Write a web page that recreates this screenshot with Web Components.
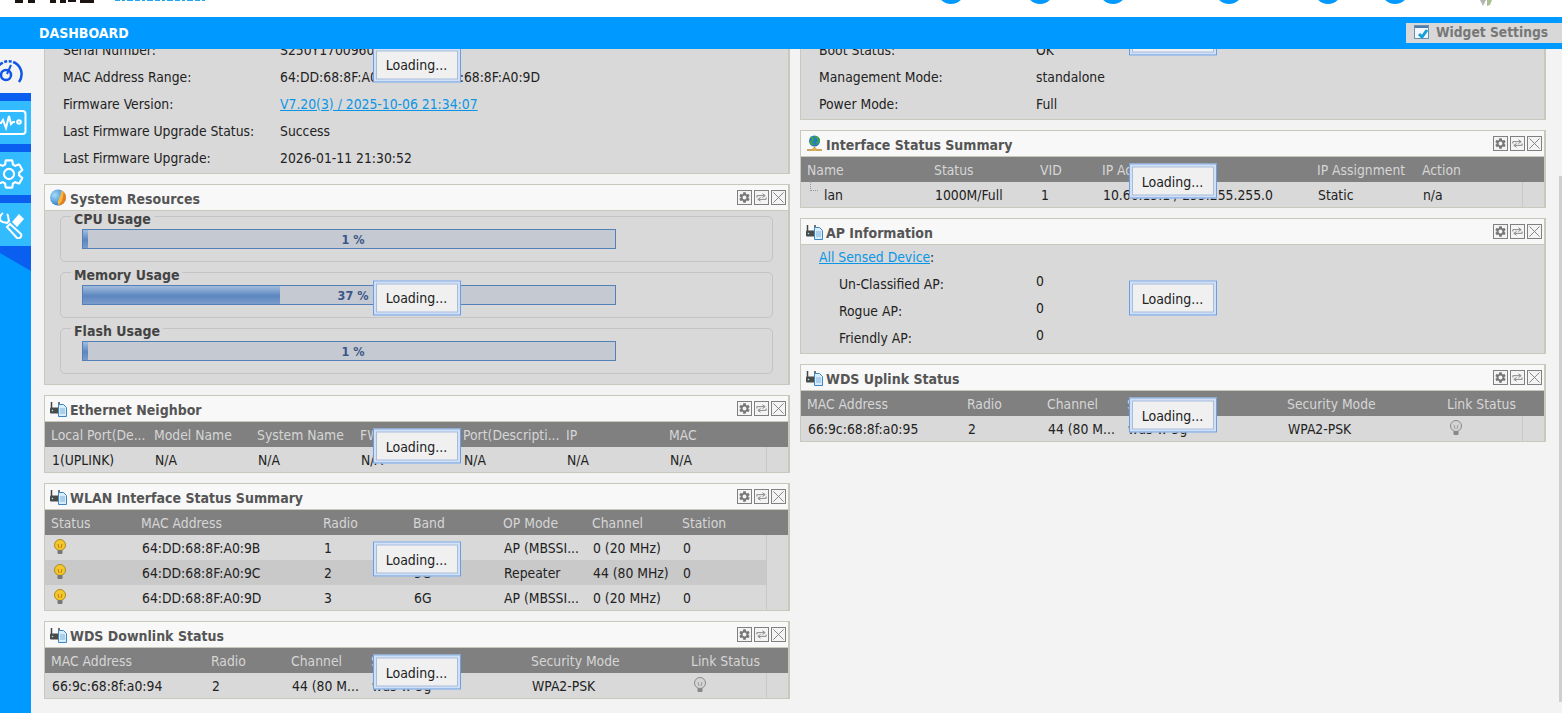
<!DOCTYPE html>
<html lang="en">
<head>
<meta charset="utf-8">
<title>Dashboard</title>
<style>
  html, body { margin: 0; height: 100%; overflow: hidden; background: #f3f3f3; }
  body { font: 13.8px "DejaVu Sans Condensed", "DejaVu Sans", sans-serif; font-stretch: condensed; color: #222; }
</style>
</head>
<body>
<zy-app>
  <zy-topbar slot="top"></zy-topbar>
  <zy-sidebar slot="side"></zy-sidebar>

  <zy-widget slot="left" bare height="220" style="--shift:1px">
    <zy-keyval label="Serial Number:">S250Y1700960</zy-keyval>
    <zy-keyval label="MAC Address Range:">64:DD:68:8F:A0:9B ~&nbsp; 64:DD:68:8F:A0:9D</zy-keyval>
    <zy-keyval label="Firmware Version:"><a href="#">V7.20(3) / 2025-10-06 21:34:07</a></zy-keyval>
    <zy-keyval label="Last Firmware Upgrade Status:">Success</zy-keyval>
    <zy-keyval label="Last Firmware Upgrade:">2026-01-11 21:30:52</zy-keyval>
  </zy-widget>

  <zy-widget slot="left" heading="System Resources" icon="pie" pad style="--shift:0px">
    <zy-usage label="CPU Usage" value="1"></zy-usage>
    <zy-usage label="Memory Usage" value="37"></zy-usage>
    <zy-usage label="Flash Usage" value="1"></zy-usage>
  </zy-widget>

  <zy-widget slot="left" heading="Ethernet Neighbor" icon="router">
    <zy-table cols="103 103 103 103 103 103 98"
      head="Local Port(De...|Model Name|System Name|FW Version|Port(Descripti...|IP|MAC"
      rows="1(UPLINK)|N/A|N/A|N/A|N/A|N/A|N/A"></zy-table>
  </zy-widget>

  <zy-widget slot="left" heading="WLAN Interface Status Summary" icon="router">
    <zy-table cols="90 182 90 90 89 90 91"
      head="Status|MAC Address|Radio|Band|OP Mode|Channel|Station"
      rows="@on|64:DD:68:8F:A0:9B|1|2.4G|AP (MBSSI...|0 (20 MHz)|0;@on|64:DD:68:8F:A0:9C|2|5G|Repeater|44 (80 MHz)|0;@on|64:DD:68:8F:A0:9D|3|6G|AP (MBSSI...|0 (20 MHz)|0"></zy-table>
  </zy-widget>

  <zy-widget slot="left" heading="WDS Downlink Status" icon="router">
    <zy-table cols="160 80 80 160 160 82"
      head="MAC Address|Radio|Channel|SSID|Security Mode|Link Status"
      rows="66:9c:68:8f:a0:94|2|44 (80 M...|wds-w-5g|WPA2-PSK|@off"></zy-table>
  </zy-widget>

  <zy-widget slot="right" bare height="166" style="--shift:1px">
    <zy-keyval label="Boot Status:">OK</zy-keyval>
    <zy-keyval label="Management Mode:">standalone</zy-keyval>
    <zy-keyval label="Power Mode:">Full</zy-keyval>
  </zy-widget>

  <zy-widget slot="right" heading="Interface Status Summary" icon="globe">
    <zy-table cols="127 106 62 215 105 108"
      head="Name|Status|VID|IP Address|IP Assignment|Action"
      rows="#lan|1000M/Full|1|10.66.15.1 / 255.255.255.0|Static|n/a"></zy-table>
  </zy-widget>

  <zy-widget slot="right" heading="AP Information" icon="router" height="109">
    <zy-keyval style="margin-top:-2px"><span><a href="#">All Sensed Device</a>:</span></zy-keyval>
    <zy-keyval sub label="Un-Classified AP:">0</zy-keyval>
    <zy-keyval sub label="Rogue AP:">0</zy-keyval>
    <zy-keyval sub label="Friendly AP:">0</zy-keyval>
  </zy-widget>

  <zy-widget slot="right" heading="WDS Uplink Status" icon="router">
    <zy-table cols="160 80 80 160 160 83"
      head="MAC Address|Radio|Channel|SSID|Security Mode|Link Status"
      rows="66:9c:68:8f:a0:95|2|44 (80 M...|wds-w-5g|WPA2-PSK|@off"></zy-table>
  </zy-widget>
</zy-app>

<script>
  const ICONS = {
    pie: `<svg width="17" height="17" viewBox="0 0 17 17"><defs><radialGradient id="pb" cx=".3" cy=".35" r=".8"><stop offset="0" stop-color="#a4dbf7"/><stop offset="1" stop-color="#1b6fc4"/></radialGradient></defs><circle cx="8" cy="8.500" r="8" fill="url(#pb)"/><path d="M11 1.200A8 8 0 0 1 9 16.400C6.500 13.500 8.500 11 9.500 8.500c1-2 2-4 1.500-7.300z" fill="#f6b73c"/><path d="M13.500 3A8 8 0 0 1 9 16.400l0-.5c3-2.500 4.500-7.500 4.500-12.900z" fill="#e8791c"/></svg>`,
    router: `<svg width="17" height="16" viewBox="0 0 17 16"><path d="M1.500 1v6M9 1v6" stroke="#444" stroke-width="1.500"/><rect x="0" y="6.500" width="10" height="6" rx="1" fill="#4a4a4a"/><circle cx="2.500" cy="9.500" r=".8" fill="#8fc"/><path d="M8.500 3.500h5l3 3v9h-8z" fill="#d8ecfa" stroke="#3c86c6"/><path d="M10 8h5M10 10h5M10 12h5" stroke="#7fb3dc"/></svg>`,
    globe: `<svg width="17" height="17" viewBox="0 0 17 17"><circle cx="8.500" cy="6" r="5.500" fill="#2a78cc"/><path d="M4.500 2.500c2 0 3 1 2.500 2.500S4.500 6 5 8s2.500 0 3 2M9.500 1c0 2 3 1.500 3.500 3.500S10.500 7 11.500 9" stroke="#3aa83a" stroke-width="2" fill="none"/><path d="M8.500 11.500v2M1 15h15" stroke="#b98a2e" stroke-width="1.500"/><rect x="6.500" y="13" width="4" height="3" fill="#e0b050"/></svg>`,
    on: `<svg width="14" height="16" viewBox="0 0 14 16"><circle cx="7" cy="6" r="5.500" fill="#f4c82c" stroke="#a88a20"/><path d="M5 5l1 4M9 5L8 9" stroke="#c07a10"/><rect x="4.500" y="11" width="5" height="4" rx="1" fill="#777"/></svg>`,
    off: `<svg width="14" height="16" viewBox="0 0 14 16"><circle cx="7" cy="6" r="5.500" fill="#d4d4d4" stroke="#8a8a8a"/><path d="M5 5l1 4M9 5L8 9" stroke="#999"/><rect x="4.500" y="11" width="5" height="4" rx="1" fill="#888"/></svg>`
  };
  const GEAR = "M19.140 12.940c.04-.3.06-.61.06-.94 0-.32-.02-.64-.07-.94l2.030-1.580a.49.49 0 0 0 .12-.61l-1.920-3.320a.488.488 0 0 0-.59-.22l-2.390.96c-.5-.38-1.030-.7-1.620-.94l-.36-2.540a.484.484 0 0 0-.48-.41h-3.840c-.24 0-.43.17-.47.41l-.36 2.540c-.59.24-1.130.57-1.620.94l-2.390-.96c-.22-.08-.47 0-.59.22L2.740 8.870c-.12.21-.08.47.12.61l2.030 1.580c-.05.3-.09.63-.09.94s.02.64.07.94l-2.030 1.580a.49.49 0 0 0-.12.61l1.920 3.320c.12.22.37.29.59.22l2.390-.96c.5.38 1.030.7 1.620.94l.36 2.540c.05.24.24.41.48.41h3.840c.24 0 .44-.17.47-.41l.36-2.540c.59-.24 1.130-.56 1.620-.94l2.390.96c.22.08.47 0 .59-.22l1.920-3.320c.12-.22.07-.47-.12-.61l-2.010-1.580zM12 15.600c-1.980 0-3.600-1.620-3.600-3.600s1.620-3.600 3.600-3.600 3.600 1.620 3.600 3.600-1.620 3.600-3.600 3.600z";

  class ZyApp extends HTMLElement {
    constructor() {
      super();
      this.attachShadow({ mode: "open" });
      this.shadowRoot.innerHTML = `
        <style>
          :host { display: grid; grid-template-columns: 31px 1fr; grid-template-rows: 49px 1fr; height: 713px; overflow: hidden; }
          .top { grid-column: 1 / 3; position: relative; z-index: 2; }
          main { position: relative; overflow: hidden; padding-left: 13px; }
          .cols { display: grid; grid-template-columns: 746px 746px; gap: 10px; margin-top: -96px; align-items: start; }
          .col { display: flex; flex-direction: column; gap: 10px; }
          .thumb { position: absolute; right: 0; top: 127px; width: 3px; height: 526px; background: #cfcfcf; }
        </style>
        <div class="top"><slot name="top"></slot></div>
        <slot name="side"></slot>
        <main>
          <div class="cols">
            <div class="col"><slot name="left"></slot></div>
            <div class="col"><slot name="right"></slot></div>
          </div>
          <div class="thumb"></div>
        </main>`;
    }
  }

  class ZyTopbar extends HTMLElement {
    constructor() {
      super();
      this.attachShadow({ mode: "open" });
      this.shadowRoot.innerHTML = `
        <style>
          :host { display: block; }
          .head { position: relative; height: 17px; background: #fff; overflow: hidden; }
          .logo { position: absolute; left: 0; top: 0; }
          .dots { display: flex; margin-left: 937px; }
          .dots i { display: block; width: 28px; height: 28px; margin-top: -24px; border-radius: 50%; background: #0099ff; }
          .fan { position: absolute; left: 1477px; top: 0; }
          .bar { height: 32px; background: #0099ff; display: flex; align-items: center; justify-content: space-between; }
          .title { margin-left: 39px; color: #fff; font-weight: bold; font-size: 14px; }
          .settings { display: flex; align-items: center; gap: 7px; height: 20px; width: 156px; box-sizing: border-box; padding: 0 0 2px 8px; background: #d8d8d8; color: #777; font-weight: bold; font-size: 13.7px; }
        </style>
        <div class="head">
          <svg class="logo" width="210" height="4" aria-hidden="true">
            <g fill="#1c1412"><rect x="15" width="8" height="3"/><rect x="28" width="7" height="3"/><rect x="50" width="6" height="3"/><rect x="60" width="6" height="3"/><rect x="68" width="8" height="2"/><rect x="80" width="14" height="3"/></g>
            <path d="M115 .5H205" stroke="#1ea7f2" stroke-dasharray="5 2 3 2 6 2"/>
          </svg>
          <div class="dots">
            <i></i><i style="margin-left:61px"></i><i style="margin-left:45px"></i><i style="margin-left:88px"></i><i style="margin-left:71px"></i><i style="margin-left:39px"></i>
          </div>
          <svg class="fan" width="20" height="7" aria-hidden="true"><path d="M3 0l3 6 3-6z" fill="#b5b5b5"/><path d="M10 0v6l3-1 2-5z" fill="#a8c090"/></svg>
        </div>
        <div class="bar">
          <div class="title">DASHBOARD</div>
          <div class="settings">
            <svg width="15" height="14" viewBox="0 0 15 14"><rect x=".5" y=".5" width="14" height="13" fill="#f4f8fc" stroke="#6a8fb5"/><rect x="1" y="1" width="13" height="2" fill="#4f7cae"/><path d="M5 9l3 3 5-7" fill="none" stroke="#14a0d8" stroke-width="3"/></svg>
            <span>Widget Settings</span>
          </div>
        </div>`;
    }
  }

  class ZySidebar extends HTMLElement {
    constructor() {
      super();
      this.attachShadow({ mode: "open" });
      this.shadowRoot.innerHTML = `
        <style>
          :host { display: flex; flex-direction: column; background: #0099ff; overflow: hidden; }
          .home { height: 44px; background: #f3f3f3; overflow: hidden; flex: none; }
          .home svg { display: block; margin: 9px 0 0 -8px; }
          .item { height: 43px; flex: none; margin-top: 8px; background: #33bbff; display: flex; align-items: center; overflow: hidden; }
          .gap { height: 8px; background: #0a5ef0; margin-bottom: -8px; flex: none; position: relative; }
          .item svg { flex: none; }
          .corner { display: block; flex: none; }
        </style>
        <div class="home">
          <svg width="32" height="28" viewBox="0 0 32 28" fill="none" stroke="#0f55e8" stroke-width="2.500">
            <path d="M7 25A13 13 0 1 1 27 24" stroke-dasharray="24 1.500 3 1.500 3 1.500 40"/>
            <circle cx="14" cy="17" r="5"/>
            <path d="M15 16l4-9" stroke-width="2"/>
          </svg>
        </div>
        <div class="gap"></div>
        <div class="item">
          <svg style="margin-left:-9px" width="36" height="26" viewBox="0 0 36 26" fill="none" stroke="#fff" stroke-width="2">
            <rect x="1" y="1" width="33.500" height="23" rx="3"/>
            <path d="M3 13h7l2-3 3 8 3-12 2 8 2-2h2"/><circle cx="28" cy="12" r="1.800"/>
          </svg>
        </div>
        <div class="gap"></div>
        <div class="item">
          <svg style="margin-left:-8px" width="34" height="34" viewBox="0 0 24 24" fill="none" stroke="#fff" stroke-width="1.500"><path d="${GEAR}"/></svg>
        </div>
        <div class="gap"></div>
        <div class="item">
          <svg width="26" height="28" viewBox="0 0 26 28" fill="none" stroke="#fff" stroke-width="2">
            <path d="M3 2C0 4-1 8 1 10c2 2 5 1 6 2l2-2C8 8 9 5 7 3"/>
            <path d="M7 16l3-3 11 10a3 3 0 0 1-4 4z"/>
            <path d="M12 11l7-8 5 5-7 8z" fill="#fff" stroke="none"/>
          </svg>
        </div>
        <svg class="corner" width="31" height="25" viewBox="0 0 31 25"><rect width="31" height="25" fill="#0a5ef0"/><path d="M0 7L31 25H0z" fill="#0099ff"/></svg>`;
    }
  }

  class ZyWidget extends HTMLElement {
    constructor() {
      super();
      this.attachShadow({ mode: "open" });
    }
    connectedCallback() {
      const heading = this.getAttribute("heading");
      const icon = ICONS[this.getAttribute("icon")] || "";
      const height = this.getAttribute("height");
      const bare = this.hasAttribute("bare");
      const pad = this.hasAttribute("pad");
      this.shadowRoot.innerHTML = `
        <style>
          :host { display: block; border: 1px solid #c8c8bc; border-right-width: 2px; }
          header { height: 25px; background: #f8f8f8; border-bottom: 1px solid #c8c8bc; display: flex; align-items: center; gap: 3px; padding: 0 2px 0 5px; }
          h2 { flex: 1; margin: 0; padding-top: 2px; font-size: 14px; font-weight: bold; color: #555; }
          .tool { display: block; width: 13px; height: 13px; border: 1px solid #808080; background: #f4f4f4; }
          .tools { display: flex; gap: 2px; }
          .body { position: relative; background: #d9d9d9; display: flex; flex-direction: column; box-sizing: border-box; ${height ? `height:${height - 1}px;` : ""} ${bare ? "justify-content:flex-end;padding-bottom:2px;" : ""} ${pad ? "padding:5px 15px 10px;gap:10px;" : ""} }
          .loading { position: absolute; left: 50%; top: 50%; transform: translate(-50%, -50%); margin-top: var(--shift, -1px); width: 88px; height: 35px; box-sizing: border-box; border: 1px solid #6a9fe6; background: #f0f0f0; box-shadow: inset 0 0 0 2px #cfe0f8, inset 0 0 0 3px #a9bcd8; display: flex; align-items: center; justify-content: center; color: #222; font-size: 14px; }
        </style>
        ${bare ? "" : `<header>${icon}<h2>${heading}</h2>
          <div class="tools">
            <svg class="tool" viewBox="0 0 24 24"><path d="${GEAR}" fill="#777"/></svg>
            <svg class="tool" viewBox="0 0 14 14" fill="none" stroke="#808080"><path d="M2 7V5h8M8 3l3 2-3 2M12 7v2H4M6 7L3 9l3 2"/></svg>
            <svg class="tool" viewBox="0 0 14 14" fill="none" stroke="#808080"><path d="M1.500 1.500l11 11M12.500 1.500l-11 11"/></svg>
          </div></header>`}
        <div class="body"><slot></slot><div class="loading">Loading...</div></div>`;
    }
  }

  class ZyKeyval extends HTMLElement {
    constructor() {
      super();
      this.attachShadow({ mode: "open" });
    }
    connectedCallback() {
      const label = this.getAttribute("label");
      const sub = this.hasAttribute("sub");
      this.shadowRoot.innerHTML = `
        <style>
          :host { display: flex; align-items: center; height: 27px; padding-left: ${sub ? 38 : 18}px; color: #222; }
          .label { flex: none; width: ${sub ? 197 : 217}px; }
          .value { ${sub ? "margin-bottom: 6px;" : ""} white-space: nowrap; }
        </style>
        ${label ? `<span class="label">${label}</span>` : ""}
        <span class="value"><slot></slot></span>`;
      this.querySelectorAll("a").forEach(a => { a.style.color = "#0a96e6"; });
    }
  }

  class ZyUsage extends HTMLElement {
    constructor() {
      super();
      this.attachShadow({ mode: "open" });
    }
    connectedCallback() {
      const value = Number(this.getAttribute("value"));
      this.shadowRoot.innerHTML = `
        <style>
          :host { display: block; }
          .group { position: relative; height: 46px; box-sizing: border-box; padding: 12px 0 0 21px; border: 1px solid #c4c4c4; border-radius: 5px; }
          .legend { position: absolute; left: 10px; top: -5px; padding: 0 3px; background: #d9d9d9; font-size: 14px; font-weight: bold; color: #444; line-height: 14px; }
          .bar { position: relative; width: 534px; height: 20px; box-sizing: border-box; border: 1px solid #5580b8; background: #c5c9d1; }
          .fill { height: 100%; background: linear-gradient(#a3bcdd, #5c86c0 55%, #7a9ccb); }
          .text { position: absolute; inset: 0; padding-left: 8px; text-align: center; line-height: 19px; font-size: 12.500px; font-weight: bold; color: #3a5788; }
        </style>
        <div class="group">
          <div class="legend">${this.getAttribute("label")}</div>
          <div class="bar"><div class="fill" style="width:${Math.max(value * 5.32, 5)}px"></div><div class="text">${value} %</div></div>
        </div>`;
    }
  }

  class ZyTable extends HTMLElement {
    constructor() {
      super();
      this.attachShadow({ mode: "open" });
    }
    connectedCallback() {
      const cols = this.getAttribute("cols").split(" ").map(c => c + "px").join(" ");
      const head = this.getAttribute("head").split("|");
      const rows = this.getAttribute("rows").split(";").map(r => r.split("|"));
      const cell = v => {
        if (v[0] === "@") return `<span class="cell bulb">${ICONS[v.slice(1)]}</span>`;
        if (v[0] === "#") return `<span class="cell tree">${v.slice(1)}</span>`;
        return `<span class="cell">${v}</span>`;
      };
      this.shadowRoot.innerHTML = `
        <style>
          :host { display: block; background: #d9d9d9; }
          .head, .row { display: grid; grid-template-columns: ${cols}; height: 25px; align-items: center; white-space: nowrap; }
          .head { background: #808080; color: #d6d6d6; }
          .head span { padding-left: 6px; }
          .row { box-sizing: border-box; margin-right: 21px; border-right: 1px solid #c8c8c8; color: #222; }
          .row:nth-of-type(odd) { background: #c9c9c9; }
          .cell { padding-left: 7px; overflow: visible; }
          .bulb { padding-left: 8px; line-height: 0; margin-top: -2px; }
          .tree { position: relative; padding-left: 23px; }
          .tree::before { content: ""; position: absolute; left: 9px; top: -6px; width: 7px; height: 9px; border-left: 1px dotted #999; border-bottom: 1px dotted #999; }
        </style>
        <div class="head">${head.map(h => `<span>${h}</span>`).join("")}</div>
        ${rows.map(r => `<div class="row">${r.map(cell).join("")}</div>`).join("")}`;
    }
  }

  customElements.define("zy-app", ZyApp);
  customElements.define("zy-topbar", ZyTopbar);
  customElements.define("zy-sidebar", ZySidebar);
  customElements.define("zy-widget", ZyWidget);
  customElements.define("zy-keyval", ZyKeyval);
  customElements.define("zy-usage", ZyUsage);
  customElements.define("zy-table", ZyTable);
</script>
</body>
</html>
